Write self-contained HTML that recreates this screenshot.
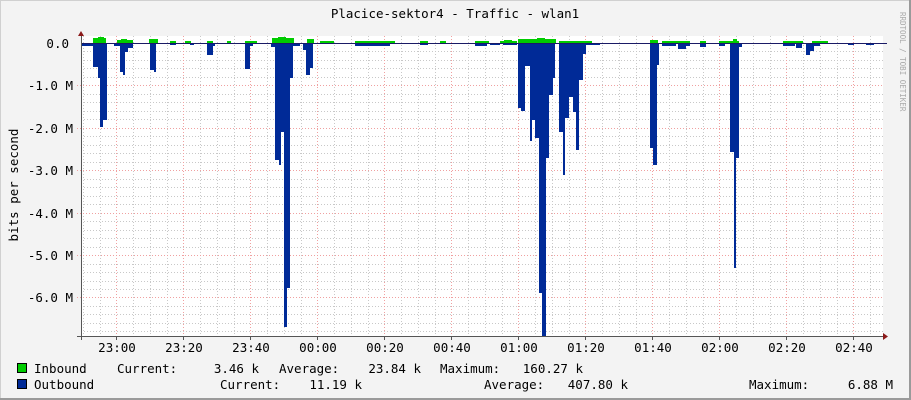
<!DOCTYPE html>
<html><head><meta charset="utf-8"><style>
html,body{margin:0;padding:0;background:#f3f3f3}
svg{display:block}
text{font-family:"DejaVu Sans Mono","Liberation Mono",monospace;font-size:12.5px;fill:#000}
</style></head><body>
<svg width="911" height="400" xmlns="http://www.w3.org/2000/svg">
<rect width="911" height="400" fill="#f3f3f3"/>
<line x1="0" y1="0.5" x2="911" y2="0.5" stroke="#d0d0d0"/>
<line x1="0.5" y1="0" x2="0.5" y2="400" stroke="#d0d0d0"/>
<line x1="910" y1="0" x2="910" y2="400" stroke="#9a9a9a" stroke-width="2"/>
<line x1="0" y1="399" x2="911" y2="399" stroke="#9a9a9a" stroke-width="2"/>
<rect x="81" y="36" width="802" height="300" fill="#fff"/>
<g stroke="#c8c8c8" stroke-dasharray="1,2" stroke-width="1">
<path d="M83.5 36V336M100.5 36V336M133.5 36V336M150.5 36V336M167.5 36V336M200.5 36V336M217.5 36V336M234.5 36V336M267.5 36V336M284.5 36V336M301.5 36V336M334.5 36V336M351.5 36V336M368.5 36V336M401.5 36V336M418.5 36V336M435.5 36V336M468.5 36V336M485.5 36V336M502.5 36V336M535.5 36V336M552.5 36V336M569.5 36V336M602.5 36V336M619.5 36V336M636.5 36V336M669.5 36V336M686.5 36V336M703.5 36V336M736.5 36V336M753.5 36V336M770.5 36V336M803.5 36V336M820.5 36V336M837.5 36V336M870.5 36V336"/>
<path d="M81 51.5H883M81 60.5H883M81 68.5H883M81 77.5H883M81 94.5H883M81 102.5H883M81 111.5H883M81 119.5H883M81 136.5H883M81 145.5H883M81 153.5H883M81 162.5H883M81 179.5H883M81 187.5H883M81 196.5H883M81 204.5H883M81 221.5H883M81 230.5H883M81 238.5H883M81 247.5H883M81 264.5H883M81 272.5H883M81 281.5H883M81 289.5H883M81 306.5H883M81 314.5H883M81 323.5H883M81 331.5H883"/>
</g>
<g stroke="#f0a0a0" stroke-dasharray="1,2" stroke-width="1">
<path d="M116.5 36V340M183.5 36V340M250.5 36V340M317.5 36V340M384.5 36V340M451.5 36V340M518.5 36V340M585.5 36V340M652.5 36V340M719.5 36V340M786.5 36V340M853.5 36V340"/>
<path d="M77 85.5H883M77 128.5H883M77 170.5H883M77 213.5H883M77 255.5H883M77 297.5H883"/>
</g>
<g fill="#00cc00">
<rect x="93" y="38" width="13" height="5"/><rect x="98" y="37" width="6" height="2"/>
<rect x="117" y="40" width="16" height="3"/><rect x="121" y="39" width="6" height="1"/>
<rect x="149" y="39" width="9" height="4"/><rect x="170" y="41" width="6" height="2"/>
<rect x="185" y="41" width="6" height="2"/><rect x="207" y="41" width="6" height="2"/>
<rect x="227" y="41" width="4" height="2"/><rect x="245" y="41" width="12" height="2"/>
<rect x="272" y="38" width="22" height="5"/><rect x="278" y="37" width="8" height="1"/>
<rect x="307" y="39" width="7" height="4"/><rect x="320" y="41" width="14" height="2"/>
<rect x="355" y="41" width="40" height="2"/><rect x="420" y="41" width="8" height="2"/>
<rect x="440" y="41" width="6" height="2"/><rect x="475" y="41" width="14" height="2"/>
<rect x="500" y="41" width="17" height="2"/><rect x="504" y="40" width="8" height="1"/>
<rect x="518" y="39" width="38" height="4"/><rect x="537" y="38" width="8" height="1"/>
<rect x="559" y="41" width="33" height="2"/><rect x="650" y="40" width="8" height="3"/>
<rect x="662" y="41" width="28" height="2"/><rect x="700" y="41" width="6" height="2"/>
<rect x="719" y="41" width="20" height="2"/><rect x="733" y="39" width="4" height="2"/>
<rect x="783" y="41" width="20" height="2"/><rect x="812" y="41" width="16" height="2"/>
</g>
<g fill="#002a97">
<rect x="81" y="43" width="12" height="3"/>
<rect x="93" y="43" width="5" height="24"/><rect x="98" y="43" width="2" height="35"/><rect x="100" y="43" width="3" height="84"/><rect x="103" y="43" width="4" height="77"/>
<rect x="114" y="43" width="6" height="3"/><rect x="120" y="43" width="3" height="29"/><rect x="123" y="43" width="2" height="32"/><rect x="125" y="43" width="3" height="9"/><rect x="128" y="43" width="5" height="5"/>
<rect x="150" y="43" width="4" height="27"/><rect x="154" y="43" width="2" height="29"/>
<rect x="170" y="43" width="6" height="2"/><rect x="190" y="43" width="4" height="2"/>
<rect x="207" y="43" width="6" height="12"/><rect x="213" y="43" width="2" height="3"/>
<rect x="245" y="43" width="5" height="26"/><rect x="250" y="43" width="3" height="3"/>
<rect x="271" y="43" width="4" height="4"/><rect x="275" y="43" width="4" height="117"/><rect x="279" y="43" width="2" height="122"/><rect x="281" y="43" width="3" height="89"/><rect x="284" y="43" width="3" height="284"/><rect x="287" y="43" width="3" height="245"/><rect x="290" y="43" width="3" height="35"/><rect x="293" y="43" width="7" height="3"/>
<rect x="303" y="43" width="3" height="7"/><rect x="306" y="43" width="4" height="32"/><rect x="310" y="43" width="3" height="25"/>
<rect x="355" y="43" width="35" height="3"/><rect x="420" y="43" width="8" height="2"/>
<rect x="475" y="43" width="12" height="3"/><rect x="490" y="43" width="10" height="2"/><rect x="503" y="43" width="14" height="2"/>
<rect x="518" y="43" width="3" height="65"/><rect x="521" y="43" width="4" height="68"/><rect x="525" y="43" width="5" height="23"/><rect x="530" y="43" width="2" height="98"/><rect x="532" y="43" width="3" height="77"/><rect x="535" y="43" width="4" height="95"/><rect x="539" y="43" width="3" height="250"/><rect x="542" y="43" width="4" height="293"/><rect x="546" y="43" width="3" height="115"/><rect x="549" y="43" width="4" height="52"/><rect x="553" y="43" width="2" height="35"/>
<rect x="559" y="43" width="4" height="89"/><rect x="563" y="43" width="2" height="132"/><rect x="565" y="43" width="4" height="75"/><rect x="569" y="43" width="4" height="54"/><rect x="573" y="43" width="3" height="69"/><rect x="576" y="43" width="3" height="107"/><rect x="579" y="43" width="4" height="37"/><rect x="583" y="43" width="3" height="11"/><rect x="586" y="43" width="14" height="2"/>
<rect x="650" y="43" width="3" height="105"/><rect x="653" y="43" width="4" height="122"/><rect x="657" y="43" width="2" height="22"/>
<rect x="662" y="43" width="14" height="3"/><rect x="678" y="43" width="8" height="6"/><rect x="686" y="43" width="4" height="3"/><rect x="700" y="43" width="6" height="4"/>
<rect x="719" y="43" width="6" height="3"/><rect x="730" y="43" width="4" height="109"/><rect x="734" y="43" width="2" height="225"/><rect x="736" y="43" width="3" height="115"/><rect x="739" y="43" width="3" height="4"/>
<rect x="783" y="43" width="12" height="3"/><rect x="796" y="43" width="6" height="5"/><rect x="806" y="43" width="4" height="12"/><rect x="810" y="43" width="4" height="8"/><rect x="814" y="43" width="6" height="3"/>
<rect x="848" y="43" width="6" height="2"/><rect x="866" y="43" width="8" height="2"/>
</g>
<line x1="81" y1="43.5" x2="887" y2="43.5" stroke="#1a1a66" stroke-width="1"/>
<line x1="81.5" y1="33" x2="81.5" y2="340" stroke="#555"/>
<line x1="77" y1="336.5" x2="887" y2="336.5" stroke="#555"/>
<path d="M78 36L81 31L84 36Z" fill="#8b1a1a"/>
<path d="M883 333L888 336.5L883 340Z" fill="#8b1a1a"/>
<g stroke="#555"><path d="M116.5 336V340M183.5 336V340M250.5 336V340M317.5 336V340M384.5 336V340M451.5 336V340M518.5 336V340M585.5 336V340M652.5 336V340M719.5 336V340M786.5 336V340M853.5 336V340"/></g>
<text x="455" y="18" text-anchor="middle">Placice-sektor4 - Traffic - wlan1</text>
<text x="0" y="0" transform="translate(18,185) rotate(-90)" text-anchor="middle">bits per second</text>
<text transform="translate(900,12) rotate(90)" style="font-size:7.5px;fill:#aaa">RRDTOOL / TOBI OETIKER</text>
<g text-anchor="end">
<text x="69" y="48">0.0</text>
<text x="73" y="90">-1.0 M</text>
<text x="73" y="133">-2.0 M</text>
<text x="73" y="175">-3.0 M</text>
<text x="73" y="218">-4.0 M</text>
<text x="73" y="260">-5.0 M</text>
<text x="73" y="302">-6.0 M</text>
</g>
<g text-anchor="middle">
<text x="117" y="352">23:00</text><text x="184" y="352">23:20</text><text x="251" y="352">23:40</text><text x="318" y="352">00:00</text><text x="385" y="352">00:20</text><text x="452" y="352">00:40</text><text x="519" y="352">01:00</text><text x="586" y="352">01:20</text><text x="653" y="352">01:40</text><text x="720" y="352">02:00</text><text x="787" y="352">02:20</text><text x="854" y="352">02:40</text>
</g>
<rect x="17.5" y="363.5" width="9" height="9" fill="#00cc00" stroke="#000"/>
<rect x="17.5" y="379.5" width="9" height="9" fill="#002a97" stroke="#000"/>
<text x="34" y="373">Inbound</text>
<text x="117" y="373">Current:</text>
<text x="259" y="373" text-anchor="end">3.46 k</text>
<text x="279" y="373">Average:</text>
<text x="421" y="373" text-anchor="end">23.84 k</text>
<text x="440" y="373">Maximum:</text>
<text x="583" y="373" text-anchor="end">160.27 k</text>
<text x="34" y="389">Outbound</text>
<text x="220" y="389">Current:</text>
<text x="362" y="389" text-anchor="end">11.19 k</text>
<text x="484" y="389">Average:</text>
<text x="628" y="389" text-anchor="end">407.80 k</text>
<text x="749" y="389">Maximum:</text>
<text x="893" y="389" text-anchor="end">6.88 M</text>
</svg>
</body></html>
